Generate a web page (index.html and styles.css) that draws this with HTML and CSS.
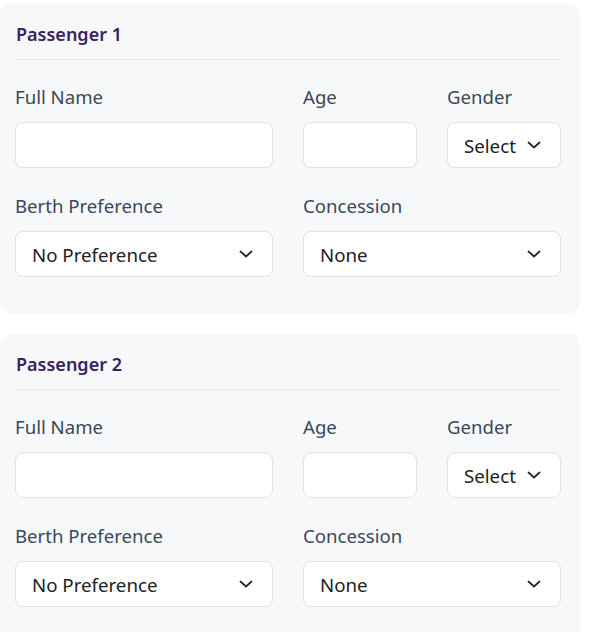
FILE: index.html
```html
<!DOCTYPE html>
<html lang="en">
<head>
<meta charset="utf-8">
<title>Passengers</title>
<link rel="stylesheet" href="styles.css">
</head>
<body>
<div class="list">
  <section class="card">
    <h3 class="card-title">Passenger 1</h3>
    <div class="grid">
      <div class="field span2">
        <label class="label">Full Name</label>
        <input class="control" type="text">
      </div>
      <div class="field">
        <label class="label">Age</label>
        <input class="control" type="text">
      </div>
      <div class="field">
        <label class="label">Gender</label>
        <div class="select-wrap">
          <select class="control select"><option>Select</option></select>
          <svg class="chev" viewBox="0 0 14 8" width="14" height="8"><path d="M1.5 1.5 L7 6.5 L12.5 1.5" fill="none" stroke="#1f2937" stroke-width="1.8" stroke-linecap="round" stroke-linejoin="round"/></svg>
        </div>
      </div>
      <div class="field span2">
        <label class="label">Berth Preference</label>
        <div class="select-wrap">
          <select class="control select"><option>No Preference</option></select>
          <svg class="chev" viewBox="0 0 14 8" width="14" height="8"><path d="M1.5 1.5 L7 6.5 L12.5 1.5" fill="none" stroke="#1f2937" stroke-width="1.8" stroke-linecap="round" stroke-linejoin="round"/></svg>
        </div>
      </div>
      <div class="field span2">
        <label class="label">Concession</label>
        <div class="select-wrap">
          <select class="control select"><option>None</option></select>
          <svg class="chev" viewBox="0 0 14 8" width="14" height="8"><path d="M1.5 1.5 L7 6.5 L12.5 1.5" fill="none" stroke="#1f2937" stroke-width="1.8" stroke-linecap="round" stroke-linejoin="round"/></svg>
        </div>
      </div>
    </div>
  </section>
  <section class="card">
    <h3 class="card-title">Passenger 2</h3>
    <div class="grid">
      <div class="field span2">
        <label class="label">Full Name</label>
        <input class="control" type="text">
      </div>
      <div class="field">
        <label class="label">Age</label>
        <input class="control" type="text">
      </div>
      <div class="field">
        <label class="label">Gender</label>
        <div class="select-wrap">
          <select class="control select"><option>Select</option></select>
          <svg class="chev" viewBox="0 0 14 8" width="14" height="8"><path d="M1.5 1.5 L7 6.5 L12.5 1.5" fill="none" stroke="#1f2937" stroke-width="1.8" stroke-linecap="round" stroke-linejoin="round"/></svg>
        </div>
      </div>
      <div class="field span2">
        <label class="label">Berth Preference</label>
        <div class="select-wrap">
          <select class="control select"><option>No Preference</option></select>
          <svg class="chev" viewBox="0 0 14 8" width="14" height="8"><path d="M1.5 1.5 L7 6.5 L12.5 1.5" fill="none" stroke="#1f2937" stroke-width="1.8" stroke-linecap="round" stroke-linejoin="round"/></svg>
        </div>
      </div>
      <div class="field span2">
        <label class="label">Concession</label>
        <div class="select-wrap">
          <select class="control select"><option>None</option></select>
          <svg class="chev" viewBox="0 0 14 8" width="14" height="8"><path d="M1.5 1.5 L7 6.5 L12.5 1.5" fill="none" stroke="#1f2937" stroke-width="1.8" stroke-linecap="round" stroke-linejoin="round"/></svg>
        </div>
      </div>
    </div>
  </section>
</div>
</body>
</html>
```
FILE: styles.css
```css
* { box-sizing: border-box; }
html, body { margin: 0; padding: 0; background: #ffffff; }
body {
  font-family: "Noto Sans", "Open Sans", sans-serif;
  color: #334155;
}
.list {
  width: 580px;
  padding-top: 4px;
  display: flex;
  flex-direction: column;
  gap: 20px;
}
.card {
  background: #f7f8fa;
  border-radius: 10px;
  padding: 17px 19px 37px 15px;
}
.card-title {
  margin: 0 0 24px 0;
  padding: 0 0 11px 1px;
  border-bottom: 1px solid #e6e8ec;
  font-size: 18px;
  line-height: 27px;
  font-weight: 600;
  color: #3b2160;
}
.grid {
  display: grid;
  grid-template-columns: repeat(4, 1fr);
  column-gap: 30px;
  row-gap: 25px;
}
.span2 { grid-column: span 2; }
.field { display: flex; flex-direction: column; }
.label {
  display: block;
  font-size: 18.6px;
  line-height: 25px;
  margin: 0 0 13px 0;
  color: #3a4758;
}
.control {
  display: block;
  width: 100%;
  height: 46px;
  margin: 0;
  border: 1px solid #dfe2e7;
  border-radius: 8px;
  background: #ffffff;
  font-family: inherit;
  font-size: 18.7px;
  color: #222222;
  padding: 0 16px;
  outline: none;
}
.select-wrap { position: relative; }
.select {
  -webkit-appearance: none;
  appearance: none;
  padding-right: 36px;
}
.chev {
  position: absolute;
  right: 20px;
  top: 19px;
  pointer-events: none;
}
```
